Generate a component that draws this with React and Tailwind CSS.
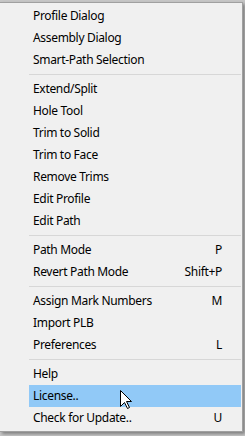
import React from "react";

const groups = [
  [["Profile Dialog"], ["Assembly Dialog"], ["Smart-Path Selection"]],
  [["Extend/Split"], ["Hole Tool"], ["Trim to Solid"], ["Trim to Face"], ["Remove Trims"], ["Edit Profile"], ["Edit Path"]],
  [["Path Mode", "P"], ["Revert Path Mode", "Shift+P"]],
  [["Assign Mark Numbers", "M"], ["Import PLB"], ["Preferences", "L"]],
  [["Help"], ["License..", "", true], ["Check for Update..", "U"]],
];

function Item({ label, shortcut, active }) {
  return (
    <div
      className={
        "h-[22px] flex items-center justify-between pl-[4px] pr-[19px] " +
        (active ? "bg-[#91c9f7]" : "")
      }
    >
      <span>{label}</span>
      {shortcut ? <span>{shortcut}</span> : null}
    </div>
  );
}

function Sep() {
  return (
    <div className="h-[7px] flex items-center">
      <div className="h-px w-full bg-[#d7d7d7]" />
    </div>
  );
}

export default function App() {
  return (
    <div className="relative w-[245px] h-[436px] overflow-hidden bg-[#c6c6c6] pt-[2px] font-['Noto_Sans',sans-serif] text-[12px] tracking-[-0.32px] text-black">
      <div className="w-[243px] bg-[#f0f0f0] border-t border-r border-b border-[#a0a0a0] pt-[2px] pb-[2px] shadow-[2px_2px_3px_rgba(0,0,0,0.35)]">
        <div className="pl-[29px] pr-[1px] flex flex-col">
          {groups.map((g, gi) => (
            <React.Fragment key={gi}>
              {gi > 0 && <Sep />}
              {g.map(([label, sc, active]) => (
                <Item key={label} label={label} shortcut={sc} active={active} />
              ))}
            </React.Fragment>
          ))}
        </div>
      </div>
      <svg
        className="absolute left-[120px] top-[390px]"
        width="13"
        height="20"
        viewBox="0 0 13 20"
      >
        <path
          d="M0.5 0.5 L0.5 16.5 L4.5 12.5 L7.5 18.5 L9.5 17.5 L6.5 11.5 L11.5 11.5 Z"
          fill="#fff"
          stroke="#000"
          strokeWidth="1"
          strokeLinejoin="miter"
        />
      </svg>
    </div>
  );
}
